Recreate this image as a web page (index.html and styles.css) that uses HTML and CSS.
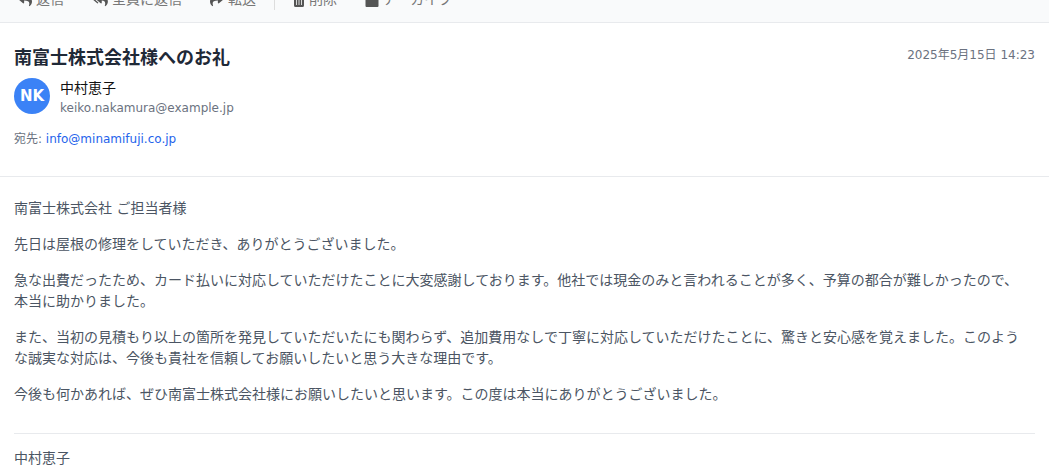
FILE: index.html
```html
<!DOCTYPE html>
<html lang="ja">
<head>
<meta charset="utf-8">
<title>南富士株式会社様へのお礼</title>
<link rel="stylesheet" href="styles.css">
</head>
<body>
<div class="toolbar" role="toolbar">
  <button class="tool" type="button"><svg class="icon" viewBox="0 0 512 512"><path d="M8.309 189.836L184.313 37.851C199.719 24.546 224 35.347 224 56.015v80.053c160.629 1.839 288 34.032 288 186.258 0 61.441-39.581 122.309-83.333 154.132-13.653 9.931-33.111-2.533-28.077-18.631 45.344-145.012-21.507-183.510-176.590-185.742V360c0 20.700-24.300 31.453-39.687 18.164l-176.004-152c-11.071-9.562-11.086-26.753 0-36.328z"/></svg>返信</button>
  <button class="tool" type="button"><svg class="icon icon-wide" viewBox="0 0 576 512"><path d="M136.309 189.836L312.313 37.851C327.720 24.546 352 35.348 352 56.015v82.763c129.182 10.231 224 52.212 224 183.548 0 61.441-39.582 122.309-83.333 154.132-13.653 9.931-33.111-2.533-28.077-18.631 38.512-123.162-3.922-169.482-112.590-182.015v84.175c0 20.701-24.300 31.453-39.687 18.164L136.309 226.164c-11.071-9.561-11.086-26.753 0-36.328zm-128 36.328L184.313 378.150C199.700 391.439 224 380.687 224 359.987v-15.818l-108.606-93.785A55.960 55.960 0 0 1 96 207.998a55.953 55.953 0 0 1 19.393-42.380L224 71.832V56.015c0-20.667-24.280-31.469-39.687-18.164L8.309 189.836c-11.086 9.575-11.071 26.767 0 36.328z"/></svg>全員に返信</button>
  <button class="tool" type="button"><svg class="icon" viewBox="0 0 512 512"><path transform="translate(512) scale(-1 1)" d="M8.309 189.836L184.313 37.851C199.719 24.546 224 35.347 224 56.015v80.053c160.629 1.839 288 34.032 288 186.258 0 61.441-39.581 122.309-83.333 154.132-13.653 9.931-33.111-2.533-28.077-18.631 45.344-145.012-21.507-183.510-176.590-185.742V360c0 20.700-24.300 31.453-39.687 18.164l-176.004-152c-11.071-9.562-11.086-26.753 0-36.328z"/></svg>転送</button>
  <span class="divider"></span>
  <button class="tool" type="button"><svg class="icon icon-narrow" viewBox="0 0 12 14"><path fill-rule="evenodd" d="M0 1h3.500l1-1h3l1 1H12v2H0zM1 4h10v8.500q0 1.500-1.500 1.500h-7Q1 14 1 12.500zM3 6v6h.8V6zM5.600 6v6h.8V6zM8.200 6v6H9V6z"/></svg>削除</button>
  <button class="tool" type="button"><svg class="icon" viewBox="0 0 14 14"><path d="M0 1h14v3H0zM.5 5h13v8q0 1-1 1h-11q-1 0-1-1z"/></svg>アーカイブ</button>
</div>
<header class="mail-head">
  <div class="title-row">
    <h1 class="subject">南富士株式会社様へのお礼</h1>
    <time class="date" datetime="2025-05-15T14:23">2025年5月15日 14:23</time>
  </div>
  <div class="sender">
    <div class="avatar">NK</div>
    <div>
      <div class="name">中村恵子</div>
      <div class="email">keiko.nakamura@example.jp</div>
    </div>
  </div>
  <div class="to">宛先: <a class="link" href="mailto:info@minamifuji.co.jp">info@minamifuji.co.jp</a></div>
</header>
<main class="body">
  <p class="para">南富士株式会社 ご担当者様</p>
  <p class="para">先日は屋根の修理をしていただき、ありがとうございました。</p>
  <p class="para">急な出費だったため、カード払いに対応していただけたことに大変感謝しております。他社では現金のみと言われることが多く、予算の都合が難しかったので、本当に助かりました。</p>
  <p class="para">また、当初の見積もり以上の箇所を発見していただいたにも関わらず、追加費用なしで丁寧に対応していただけたことに、驚きと安心感を覚えました。このような誠実な対応は、今後も貴社を信頼してお願いしたいと思う大きな理由です。</p>
  <p class="para">今後も何かあれば、ぜひ南富士株式会社様にお願いしたいと思います。この度は本当にありがとうございました。</p>
  <footer class="signature">中村恵子</footer>
</main>
</body>
</html>
```
FILE: styles.css
```css
* { box-sizing: border-box; }
body {
  margin: 0;
  overflow: hidden;
  background: #fff;
  color: #111;
  font-family: "DejaVu Sans", "Noto Sans CJK JP", sans-serif;
  font-size: 14px;
  line-height: 21px;
}
.toolbar {
  display: flex;
  align-items: center;
  gap: 4px;
  margin-top: -23px;
  padding: 12px 6px;
  background: #f9fafb;
  border-bottom: 1px solid #e8eaed;
}
.tool {
  display: flex;
  align-items: center;
  gap: 4px;
  padding: 0 12px;
  border: 0;
  background: none;
  color: #777;
  font: inherit;
  white-space: nowrap;
}
.icon { width: 14px; height: 14px; fill: #555; }
.icon-wide { width: 16px; }
.icon-narrow { width: 12px; }
.divider { width: 1px; height: 21px; margin: 0 2px; background: #ddd; }
.mail-head {
  padding: 22px 14px 28px;
  border-bottom: 1px solid #e8eaed;
}
.title-row {
  display: flex;
  justify-content: space-between;
  align-items: flex-start;
}
.subject {
  margin: 0;
  color: #1f2937;
  font-size: 18px;
  line-height: 25px;
}
.date { color: #6b7280; font-size: 12px; line-height: 20px; }
.sender {
  display: flex;
  align-items: flex-start;
  gap: 10px;
  margin-top: 8px;
}
.avatar {
  display: flex;
  align-items: center;
  justify-content: center;
  width: 36px;
  height: 36px;
  border-radius: 50%;
  background: #3b82f6;
  color: #fff;
  font-size: 15px;
  font-weight: bold;
}
.email { color: #6b7280; font-size: 12px; line-height: 18px; }
.to {
  margin-top: 13px;
  color: #6b7280;
  font-size: 12px;
  line-height: 18px;
}
.link { color: #2563eb; text-decoration: none; }
.body { padding: 21px 14px; color: #4b5563; }
.para { margin: 0 0 15px; padding-right: 8px; }
.signature {
  margin-top: 28px;
  padding-top: 14px;
  border-top: 1px solid #e8eaed;
}
```
